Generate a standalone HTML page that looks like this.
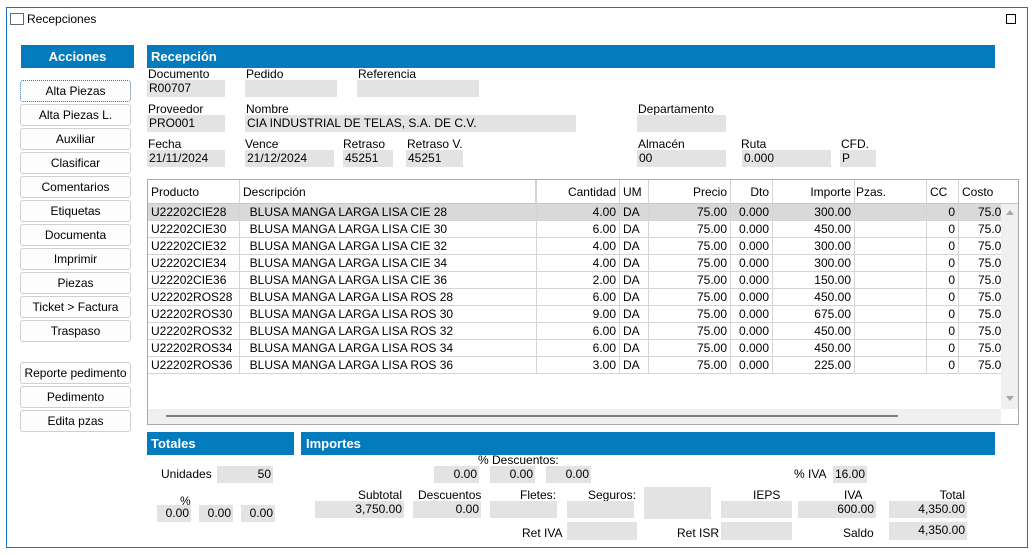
<!DOCTYPE html>
<html><head><meta charset="utf-8"><style>
*{box-sizing:border-box;margin:0;padding:0}
body{width:1036px;height:557px;background:#fff;position:relative;overflow:hidden;font-family:"Liberation Sans",sans-serif;font-size:12px;color:#000}
.a{position:absolute;white-space:nowrap;line-height:14px}
.f{position:absolute;background:#e3e3e3;line-height:17px;height:17px;padding:0 2px;white-space:nowrap}
.r{text-align:right}
.hd{position:absolute;background:#047bbd;color:#fff;font-weight:bold;font-size:13px;line-height:23px}
.b{position:absolute;left:20px;width:111px;height:22px;border:1px solid #d0d0d0;border-radius:3px;background:#fdfdfd;text-align:center;line-height:20px}
.g{position:absolute;left:147px;top:179px;width:872px;height:246px;border:1px solid #a8a8a8;overflow:hidden}
.c{position:absolute;height:17px;line-height:17px;padding:0 3px;border-right:1px solid #d4d4d4;border-bottom:1px solid #d4d4d4;white-space:nowrap;overflow:hidden}
.h{position:absolute;top:0;height:24px;line-height:24px;padding:0 3px;border-right:1px solid #d4d4d4;border-bottom:1px solid #c8c8c8;white-space:nowrap;overflow:hidden}
</style></head><body>
<div style="position:absolute;left:6px;top:7px;width:1022px;height:541px;border:1px solid #1a73c0"></div>
<div style="position:absolute;left:10px;top:13px;width:14px;height:12px;border:1px solid #5a6a80;background:#fff"></div>
<div class="a" style="left:27px;top:12px">Recepciones</div>
<div style="position:absolute;left:1006px;top:14px;width:10px;height:10px;border:1px solid #000"></div>

<div class="hd" style="left:21px;top:45px;width:113px;text-align:center">Acciones</div>
<div class="hd" style="left:147px;top:45px;width:848px;padding-left:4px">Recepción</div>

<div class="b" style="top:80px;border:1px dotted #3a6fb0">Alta Piezas</div>
<div class="b" style="top:104px">Alta Piezas L.</div>
<div class="b" style="top:128px">Auxiliar</div>
<div class="b" style="top:152px">Clasificar</div>
<div class="b" style="top:176px">Comentarios</div>
<div class="b" style="top:200px">Etiquetas</div>
<div class="b" style="top:224px">Documenta</div>
<div class="b" style="top:248px">Imprimir</div>
<div class="b" style="top:272px">Piezas</div>
<div class="b" style="top:296px">Ticket &gt; Factura</div>
<div class="b" style="top:320px">Traspaso</div>
<div class="b" style="top:362px">Reporte pedimento</div>
<div class="b" style="top:386px">Pedimento</div>
<div class="b" style="top:410px">Edita pzas</div>

<div class="a" style="left:148px;top:67px">Documento</div>
<div class="f" style="left:147px;top:80px;width:78px">R00707</div>
<div class="a" style="left:246px;top:67px">Pedido</div>
<div class="f" style="left:245px;top:80px;width:92px"></div>
<div class="a" style="left:358px;top:67px">Referencia</div>
<div class="f" style="left:357px;top:80px;width:122px"></div>

<div class="a" style="left:148px;top:102px">Proveedor</div>
<div class="f" style="left:147px;top:115px;width:78px">PRO001</div>
<div class="a" style="left:246px;top:102px">Nombre</div>
<div class="f" style="left:245px;top:115px;width:331px">CIA INDUSTRIAL DE TELAS, S.A. DE C.V.</div>
<div class="a" style="left:638px;top:102px">Departamento</div>
<div class="f" style="left:637px;top:115px;width:89px"></div>

<div class="a" style="left:148px;top:137px">Fecha</div>
<div class="f" style="left:147px;top:150px;width:78px">21/11/2024</div>
<div class="a" style="left:245px;top:137px">Vence</div>
<div class="f" style="left:245px;top:150px;width:89px">21/12/2024</div>
<div class="a" style="left:343px;top:137px">Retraso</div>
<div class="f" style="left:343px;top:150px;width:50px">45251</div>
<div class="a" style="left:407px;top:137px">Retraso V.</div>
<div class="f" style="left:406px;top:150px;width:57px">45251</div>
<div class="a" style="left:638px;top:137px">Almacén</div>
<div class="f" style="left:637px;top:150px;width:89px">00</div>
<div class="a" style="left:741px;top:137px">Ruta</div>
<div class="f" style="left:742px;top:150px;width:89px">0.000</div>
<div class="a" style="left:841px;top:137px">CFD.</div>
<div class="f" style="left:840px;top:150px;width:36px">P</div>

<div class="g">
<div class="h" style="left:0;width:92px">Producto</div>
<div class="h" style="left:92px;width:297px;border-right:2px solid #d4d4d4">Descripción</div>
<div class="h r" style="left:389px;width:83px">Cantidad</div>
<div class="h" style="left:472px;width:29px">UM</div>
<div class="h r" style="left:501px;width:82px">Precio</div>
<div class="h r" style="left:583px;width:42px">Dto</div>
<div class="h r" style="left:625px;width:82px">Importe</div>
<div class="h" style="left:705px;width:74px">Pzas.</div>
<div class="h" style="left:779px;width:32px">CC</div>
<div class="h" style="left:811px;width:60px">Costo</div>
<div id="rows"></div>
<div style="position:absolute;left:853px;top:24px;width:17px;height:205px;background:#f0f0f0"></div>
<div style="position:absolute;left:858px;top:30px;width:0;height:0;border-left:4px solid transparent;border-right:4px solid transparent;border-bottom:5px solid #a8a8a8"></div>
<div style="position:absolute;left:858px;top:216px;width:0;height:0;border-left:4px solid transparent;border-right:4px solid transparent;border-top:5px solid #a8a8a8"></div>
<div style="position:absolute;left:0;top:229px;width:853px;height:17px;background:#f0f0f0"></div>
<div style="position:absolute;left:18px;top:235px;width:732px;height:2px;background:#808080"></div>
</div>

<div class="hd" style="left:147px;top:432px;width:147px;padding-left:4px">Totales</div>
<div class="hd" style="left:301px;top:432px;width:694px;padding-left:5px">Importes</div>

<div class="a" style="left:161px;top:467px">Unidades</div>
<div class="f r" style="left:217px;top:466px;width:56px">50</div>
<div class="a" style="left:180px;top:494px">%</div>
<div class="f r" style="left:157px;top:505px;width:34px">0.00</div>
<div class="f r" style="left:199px;top:505px;width:34px">0.00</div>
<div class="f r" style="left:241px;top:505px;width:34px">0.00</div>

<div class="a" style="left:478px;top:453px">% Descuentos:</div>
<div class="f r" style="left:434px;top:466px;width:45px">0.00</div>
<div class="f r" style="left:490px;top:466px;width:45px">0.00</div>
<div class="f r" style="left:546px;top:466px;width:45px">0.00</div>
<div class="a" style="left:794px;top:467px">% IVA</div>
<div class="f" style="left:833px;top:466px;width:34px">16.00</div>

<div class="a r" style="left:340px;top:488px;width:62px">Subtotal</div>
<div class="f r" style="left:315px;top:501px;width:89px">3,750.00</div>
<div class="a" style="left:418px;top:488px">Descuentos</div>
<div class="f r" style="left:413px;top:501px;width:68px">0.00</div>
<div class="a r" style="left:490px;top:488px;width:66px">Fletes:</div>
<div class="f" style="left:490px;top:501px;width:67px"></div>
<div class="a r" style="left:567px;top:488px;width:69px">Seguros:</div>
<div class="f" style="left:567px;top:501px;width:67px"></div>
<div class="f" style="left:644px;top:487px;width:67px;height:32px"></div>
<div class="a" style="left:753px;top:488px">IEPS</div>
<div class="f" style="left:721px;top:501px;width:71px"></div>
<div class="a" style="left:844px;top:488px">IVA</div>
<div class="f r" style="left:798px;top:501px;width:78px">600.00</div>
<div class="a r" style="left:889px;top:488px;width:76px">Total</div>
<div class="f r" style="left:889px;top:501px;width:78px">4,350.00</div>

<div class="a" style="left:522px;top:526px">Ret IVA</div>
<div class="f" style="left:567px;top:522px;width:70px;height:18px"></div>
<div class="a" style="left:677px;top:526px">Ret ISR</div>
<div class="f" style="left:721px;top:522px;width:71px;height:18px"></div>
<div class="a" style="left:843px;top:526px">Saldo</div>
<div class="f r" style="left:889px;top:522px;width:78px;height:18px">4,350.00</div>

<script>
var d=[["CIE28","CIE 28","4.00","300.00"],["CIE30","CIE 30","6.00","450.00"],["CIE32","CIE 32","4.00","300.00"],["CIE34","CIE 34","4.00","300.00"],["CIE36","CIE 36","2.00","150.00"],["ROS28","ROS 28","6.00","450.00"],["ROS30","ROS 30","9.00","675.00"],["ROS32","ROS 32","6.00","450.00"],["ROS34","ROS 34","6.00","450.00"],["ROS36","ROS 36","3.00","225.00"]];
var h="";
d.forEach(function(r,i){var t=24+i*17;var bg=i==0?"background:#d9d9d9;":"";
function c(l,w,txt,cls){return '<div class="c '+(cls||'')+'" style="'+bg+'top:'+t+'px;left:'+l+'px;width:'+w+'px">'+txt+'</div>';}
h+=c(0,92,"U22202"+r[0])+c(92,297,"&nbsp;&nbsp;BLUSA MANGA LARGA LISA "+r[1])+c(389,83,r[2],"r")+c(472,29,"DA")+c(501,82,"75.00","r")+c(583,42,"0.000","r")+c(625,82,r[3],"r")+c(707,72,"")+c(779,32,"0","r")+'<div class="c" style="'+bg+'top:'+t+'px;left:811px;width:60px;padding-left:19px">75.00</div>';});
document.getElementById("rows").innerHTML=h;
</script>
</body></html>
